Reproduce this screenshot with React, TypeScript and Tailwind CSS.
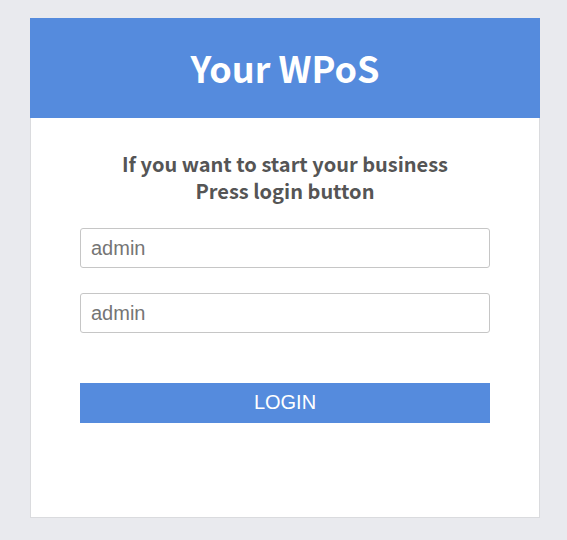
import React, { useState } from 'react';

const App: React.FC = () => {
  const [user, setUser] = useState('');
  const [pass, setPass] = useState('');

  return (
    <div className="min-h-[540px] w-full bg-[#e9eaee] pt-[18px] pl-[30px]">
      <div className="w-[510px] h-[500px] bg-white border border-[#dadbde] border-t-0 flex flex-col">
        <div className="h-[100px] bg-[#558bdd] flex items-center justify-center -mx-px">
          <h1 className="text-white text-[36px] font-bold leading-none pb-[2px] font-['Noto_Sans_CJK_KR','Open_Sans',sans-serif]">
            Your WPoS
          </h1>
        </div>
        <div className="flex flex-col items-center px-[49px] pt-[32px]">
          <p className="text-[#555555] text-[20px] font-bold leading-[27px] text-center font-['Noto_Sans_CJK_KR','Open_Sans',sans-serif]">
            If you want to start your business
            <br />
            Press login button
          </p>
          <input
            className="mt-[24px] w-full h-[40px] border border-[#c6c6c6] rounded-[3px] px-[10px] text-[20px] text-[#444] placeholder:text-[#757575] font-['Liberation_Sans',Arial,sans-serif] outline-none"
            placeholder="admin"
            value={user}
            onChange={(e) => setUser(e.target.value)}
          />
          <input
            type="password"
            className="mt-[25px] w-full h-[40px] border border-[#c6c6c6] rounded-[3px] px-[10px] text-[20px] text-[#444] placeholder:text-[#757575] font-['Liberation_Sans',Arial,sans-serif] outline-none"
            placeholder="admin"
            value={pass}
            onChange={(e) => setPass(e.target.value)}
          />
          <button className="mt-[50px] w-full h-[40px] bg-[#558bdd] text-white text-[20px] leading-none pb-[2px] font-['Liberation_Sans',Arial,sans-serif]">
            LOGIN
          </button>
        </div>
      </div>
    </div>
  );
};

export default App;
